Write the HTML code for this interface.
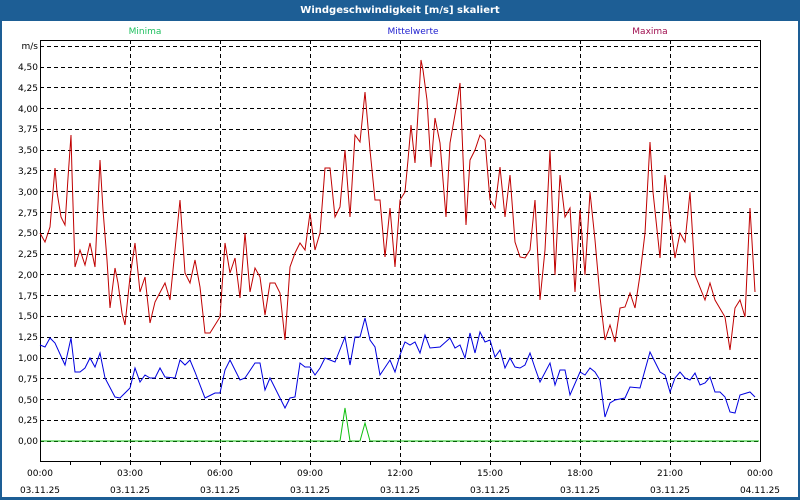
<!DOCTYPE html>
<html><head><meta charset="utf-8"><style>
body{margin:0;width:800px;height:500px;overflow:hidden;background:#fff;font-family:Tahoma,"DejaVu Sans","Liberation Sans",sans-serif}
</style></head><body>
<svg width="800" height="500" xmlns="http://www.w3.org/2000/svg" font-family="'DejaVu Sans','Liberation Sans',sans-serif" font-size="9">
<rect x="0" y="0" width="800" height="500" fill="#1d5e95"/>
<rect x="2" y="21" width="796" height="476" fill="#fff"/>
<text x="400" y="13" fill="#fff" text-anchor="middle" font-weight="bold" font-size="10">Windgeschwindigkeit [m/s] skaliert</text>
<text x="145" y="34" fill="#20c060" text-anchor="middle">Minima</text>
<text x="413" y="34" fill="#2020d0" text-anchor="middle">Mittelwerte</text>
<text x="650" y="34" fill="#a01050" text-anchor="middle">Maxima</text>
<g stroke="#000" stroke-dasharray="4,3" stroke-width="1">
<path d="M40 441.5H760M40 420.5H760M40 399.5H760M40 378.5H760M40 358.5H760M40 337.5H760M40 316.5H760M40 295.5H760M40 274.5H760M40 254.5H760M40 233.5H760M40 212.5H760M40 191.5H760M40 170.5H760M40 150.5H760M40 129.5H760M40 108.5H760M40 87.5H760M40 67.5H760M40 46.5H760"/>
<path d="M130.5 40V461M220.5 40V461M310.5 40V461M400.5 40V461M490.5 40V461M580.5 40V461M670.5 40V461"/>
</g>
<rect x="40.5" y="40.5" width="720" height="421" fill="none" stroke="#000"/>
<path stroke="#000" d="M70.5 461v4M100.5 461v4M130.5 461v4M160.5 461v4M190.5 461v4M220.5 461v4M250.5 461v4M280.5 461v4M310.5 461v4M340.5 461v4M370.5 461v4M400.5 461v4M430.5 461v4M460.5 461v4M490.5 461v4M520.5 461v4M550.5 461v4M580.5 461v4M610.5 461v4M640.5 461v4M670.5 461v4M700.5 461v4M730.5 461v4"/>
<g text-anchor="end" fill="#000">
<text x="38" y="49">m/s</text>
<text x="38" y="70">4,50</text><text x="38" y="91">4,25</text><text x="38" y="112">4,00</text><text x="38" y="132">3,75</text><text x="38" y="153">3,50</text><text x="38" y="174">3,25</text><text x="38" y="195">3,00</text><text x="38" y="216">2,75</text><text x="38" y="236">2,50</text><text x="38" y="257">2,25</text><text x="38" y="278">2,00</text><text x="38" y="299">1,75</text><text x="38" y="319">1,50</text><text x="38" y="340">1,25</text><text x="38" y="361">1,00</text><text x="38" y="382">0,75</text><text x="38" y="403">0,50</text><text x="38" y="423">0,25</text><text x="38" y="444">0,00</text>
</g>
<g text-anchor="middle" fill="#000">
<text x="40" y="476">00:00</text><text x="40" y="493">03.11.25</text>
<text x="130" y="476">03:00</text><text x="130" y="493">03.11.25</text>
<text x="220" y="476">06:00</text><text x="220" y="493">03.11.25</text>
<text x="310" y="476">09:00</text><text x="310" y="493">03.11.25</text>
<text x="400" y="476">12:00</text><text x="400" y="493">03.11.25</text>
<text x="490" y="476">15:00</text><text x="490" y="493">03.11.25</text>
<text x="580" y="476">18:00</text><text x="580" y="493">03.11.25</text>
<text x="670" y="476">21:00</text><text x="670" y="493">03.11.25</text>
<text x="760" y="476">00:00</text><text x="760" y="493">04.11.25</text>
</g>
<polyline fill="none" stroke="#10c010" stroke-width="1" points="41,441 340,441 345,408 350,441 360,441 365,423 370,441 759,441"/>
<polyline fill="none" stroke="#0000e0" stroke-width="1" points="40,345 45,347 50,338 55,343 65,365 71,338 75,372 80,372 85,368 90,358 95,367 100,353 105,378 115,397 120,398 130,388 135,368 140,382 145,375 150,378 155,378 160,368 165,377 175,378 180,360 185,365 190,360 195,372 205,398 215,393 220,393 225,370 230,360 240,380 245,378 255,363 260,363 265,390 270,378 285,408 290,398 295,397 300,363 305,367 310,367 315,375 320,368 325,358 335,362 345,337 350,365 355,337 360,337 365,318 370,340 375,347 380,375 390,360 395,372 400,355 405,342 410,345 415,342 420,353 425,335 430,348 440,347 450,338 455,348 460,345 465,358 470,333 475,353 480,332 485,342 490,340 495,357 500,350 505,368 510,358 515,367 520,368 525,365 530,353 535,368 540,382 550,363 555,385 560,370 565,370 570,395 580,372 585,375 590,368 595,372 600,380 605,417 610,403 615,400 625,398 630,387 640,388 650,352 660,372 665,375 670,392 675,378 680,372 685,378 690,380 695,373 700,385 705,383 710,377 715,392 720,392 725,397 730,412 735,413 740,395 750,392 755,397"/>
<polyline fill="none" stroke="#c00000" stroke-width="1" points="40,233 45,242 50,227 55,168 57,192 61,217 65,225 68,178 71,135 72,173 75,267 80,250 85,265 90,243 95,267 100,160 103,210 107,260 110,308 115,268 118,283 122,313 125,325 130,277 135,243 140,292 145,277 150,323 155,302 165,283 170,300 180,200 185,273 190,283 195,260 200,287 205,333 210,333 215,325 220,317 225,243 230,273 235,258 240,298 245,233 250,292 255,268 260,277 265,315 270,283 275,283 280,293 285,340 290,267 295,253 300,243 305,250 310,213 315,250 320,233 325,168 330,168 335,217 340,207 345,150 350,217 355,135 360,142 365,92 370,150 375,200 380,200 385,257 390,208 395,267 400,200 405,192 408,160 411,125 415,163 418,113 421,60 423,70 427,100 431,167 435,118 440,143 446,217 450,143 457,103 460,83 463,157 466,225 470,160 475,150 480,135 485,140 490,200 495,208 500,167 505,217 510,175 515,242 520,257 525,258 530,250 535,200 540,300 545,250 550,150 555,275 560,175 565,217 570,208 575,292 580,210 585,275 590,192 595,240 600,297 605,340 610,325 615,342 620,308 625,307 630,293 635,308 640,275 645,233 650,142 653,192 660,258 665,175 670,220 675,258 680,233 685,242 690,192 695,275 705,300 710,283 715,300 725,317 730,350 735,308 740,300 745,317 750,208 755,292"/>
</svg>
</body></html>
